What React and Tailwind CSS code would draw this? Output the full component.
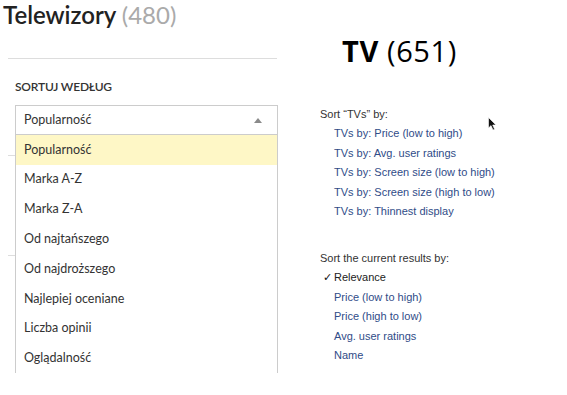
import React from "react";

const options = [
  "Popularność",
  "Marka A-Z",
  "Marka Z-A",
  "Od najtańszego",
  "Od najdroższego",
  "Najlepiej oceniane",
  "Liczba opinii",
  "Oglądalność",
];

const tvLinks = [
  "TVs by: Price (low to high)",
  "TVs by: Avg. user ratings",
  "TVs by: Screen size (low to high)",
  "TVs by: Screen size (high to low)",
  "TVs by: Thinnest display",
];

const resultLinks = ["Price (low to high)", "Price (high to low)", "Avg. user ratings", "Name"];

export default function App() {
  return (
    <div className="relative flex h-[395px] w-[567px] overflow-hidden bg-white">
      {/* Left: Polish store */}
      <div className="relative w-[290px] shrink-0 font-['Lato','Liberation_Sans',sans-serif] text-[#333]">
        <h1 className="pl-[3px] pt-[1px] text-[24px] leading-[28px] font-semibold text-[#222]">
          Telewizory <span className="font-normal text-[#aaa]">(480)</span>
        </h1>
        <div className="ml-[8px] mt-[29px] w-[269px] border-t border-[#ddd]" />
        <div className="ml-[15px] mt-[21px] text-[12px] font-semibold uppercase leading-[14px] tracking-[-0.2px] text-[#333]">
          Sortuj według
        </div>
        <div className="relative ml-[15px] mt-[11px] w-[263px]">
          <div className="flex h-[30px] items-center justify-between border border-[#ccc] pl-[8px] pr-[15px] text-[12.5px]">
            <span>Popularność</span>
            <svg width="8" height="5" viewBox="0 0 8 5">
              <polygon points="4,0 8,5 0,5" fill="#8a8a8a" />
            </svg>
          </div>
          <ul className="absolute left-0 top-full z-10 w-full border-x border-[#ccc] bg-white">
            {options.map((o, i) => (
              <li
                key={o}
                className={`flex h-[29.8px] items-center pl-[8px] text-[12.5px] ${i === 0 ? "bg-[#fef7c6]" : ""}`}
              >
                {o}
              </li>
            ))}
          </ul>
        </div>
        {/* page content hidden below the open menu */}
        <div className="ml-[8px] mt-[20px] w-[269px] border-t border-[#ddd]" />
        <div className="ml-[8px] mt-[99px] w-[269px] border-t border-[#ddd]" />
      </div>

      {/* Right: English store */}
      <div className="relative flex-1 font-['Liberation_Sans',Arial,sans-serif]">
        <div className="ml-[52px] mt-[33px] font-['Open_Sans',sans-serif] text-[29px] leading-[36px] tracking-[0.6px] text-black">
          <span className="font-bold">TV</span> (651)
        </div>
        <div className="ml-[30px] mt-[36px] text-[11px] leading-[19.4px] text-[#333]">
          <div>Sort “TVs” by:</div>
          {tvLinks.map((l) => (
            <div key={l} className="pl-[14px] text-[#304c88]">
              {l}
            </div>
          ))}
          <div className="mt-[27.5px]">Sort the current results by:</div>
          <div className="flex">
            <span className="w-[14px] pl-[3px] text-[#111]">✓</span>
            <span className="text-[#222]">Relevance</span>
          </div>
          {resultLinks.map((l) => (
            <div key={l} className="pl-[14px] text-[#304c88]">
              {l}
            </div>
          ))}
        </div>
        {/* mouse cursor */}
        <svg
          className="absolute left-[198px] top-[117px]"
          width="9"
          height="14"
          viewBox="0 0 9 14"
        >
          <path d="M0.5 0.5 L0.5 11 L3 8.6 L5 13 L6.6 12.3 L4.7 8 L8 8 Z" fill="#111" stroke="#fff" strokeWidth="0.6" />
        </svg>
      </div>
    </div>
  );
}
